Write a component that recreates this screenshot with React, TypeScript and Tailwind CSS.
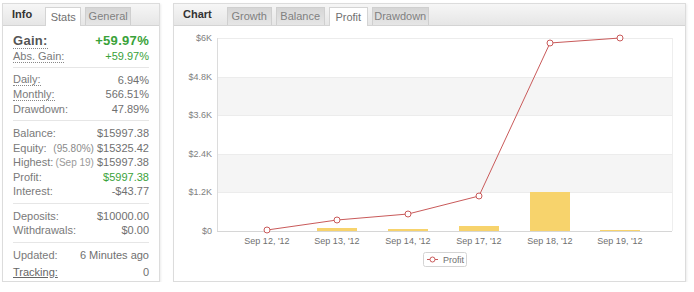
import React from "react";

const font = { fontFamily: '"Liberation Sans", Tahoma, Arial, sans-serif' };

type Row = { label: string; value: React.ReactNode; dotted?: boolean; underline?: boolean; green?: boolean };

const sections: Row[][] = [
  [
    { label: "Daily:", value: "6.94%", dotted: true },
    { label: "Monthly:", value: "566.51%", dotted: true },
    { label: "Drawdown:", value: "47.89%" },
  ],
  [
    { label: "Balance:", value: "$15997.38" },
    {
      label: "Equity:",
      value: (
        <>
          <span className="text-[10px] text-[#8a8a8a]">(95.80%)</span> $15325.42
        </>
      ),
    },
    {
      label: "Highest:",
      value: (
        <>
          <span className="text-[10px] text-[#9a9a9a]">(Sep 19)</span> $15997.38
        </>
      ),
    },
    { label: "Profit:", value: "$5997.38", green: true },
    { label: "Interest:", value: "-$43.77" },
  ],
  [
    { label: "Deposits:", value: "$10000.00" },
    { label: "Withdrawals:", value: "$0.00" },
  ],
];

const StatRow = ({ row }: { row: Row }) => (
  <div className="flex h-[14.5px] items-center justify-between">
    <span
      className={
        row.dotted
          ? "border-b border-dotted border-[#888] leading-[12px]"
          : row.underline
          ? "underline"
          : ""
      }
    >
      {row.label}
    </span>
    <span className={row.green ? "text-[#3aa23a]" : "text-[#707070]"}>{row.value}</span>
  </div>
);

const Tab = ({ label, active, w }: { label: string; active?: boolean; w: string }) => (
  <div
    className={
      active
        ? `${w} h-[19px] mt-[4px] -mb-px flex items-center justify-center bg-white border border-b-0 border-[#d4d4d4] text-[#707070]`
        : `${w} h-[18px] mt-[4px] flex items-center justify-center bg-gradient-to-b from-[#d6d6d6] to-[#e6e6e6] border border-b-0 border-[#cfcfcf] text-[#808080]`
    }
  >
    {label}
  </div>
);

const points = [
  { x: 93, y: 204, label: "Sep 12, '12", bar: 0 },
  { x: 163, y: 194, label: "Sep 13, '12", bar: 3 },
  { x: 234, y: 188, label: "Sep 14, '12", bar: 2 },
  { x: 305, y: 170, label: "Sep 17, '12", bar: 5 },
  { x: 376, y: 17, label: "Sep 18, '12", bar: 39 },
  { x: 446, y: 12, label: "Sep 19, '12", bar: 1 },
];

const yTicks = [
  { y: 12, t: "$6K" },
  { y: 51, t: "$4.8K" },
  { y: 89, t: "$3.6K" },
  { y: 128, t: "$2.4K" },
  { y: 166, t: "$1.2K" },
  { y: 205, t: "$0" },
];

const ProfitChart = () => (
  <svg width="512" height="255" className="block" style={font}>
    <rect x="43" y="51" width="455" height="38" fill="#f5f5f5" />
    <rect x="43" y="128" width="455" height="38" fill="#f5f5f5" />
    {yTicks.map((t) => (
      <g key={t.t}>
        <line x1="43" x2="498" y1={t.y + 0.5} y2={t.y + 0.5} stroke="#ececec" />
        <text x="38" y={t.y + 3} textAnchor="end" fontSize="9" fill="#808080">
          {t.t}
        </text>
      </g>
    ))}
    <line x1="498.5" x2="498.5" y1="12" y2="205" stroke="#eeeeee" />
    <line x1="43.5" x2="43.5" y1="12" y2="206" stroke="#dcdcdc" />
    <line x1="43" x2="498" y1="205.5" y2="205.5" stroke="#d6d6d6" />
    {points.map((p) =>
      p.bar > 0 ? (
        <rect key={"b" + p.label} x={p.x - 20} y={205 - p.bar} width="40" height={p.bar} fill="#f7d36c" />
      ) : null
    )}
    <polyline
      points={points.map((p) => `${p.x},${p.y}`).join(" ")}
      fill="none"
      stroke="#c95a5a"
      strokeWidth="1"
    />
    {points.map((p) => (
      <g key={p.label}>
        <circle cx={p.x} cy={p.y} r="3" fill="#fff" stroke="#c95a5a" strokeWidth="1" />
        <text x={p.x} y="218" textAnchor="middle" fontSize="9" fill="#707070">
          {p.label}
        </text>
      </g>
    ))}
    <rect x="249.5" y="226.5" width="43" height="14" rx="2" fill="#fff" stroke="#d4d4d4" />
    <line x1="253" x2="264" y1="233.5" y2="233.5" stroke="#c95a5a" />
    <circle cx="258.5" cy="233.5" r="2.5" fill="#fff" stroke="#c95a5a" />
    <text x="269" y="236.5" fontSize="9" fill="#707070">
      Profit
    </text>
  </svg>
);

export default function App() {
  return (
    <div className="flex gap-[13px] bg-white pl-[2px] pt-[3px] text-[11px] text-[#7a7a7a]" style={font}>
      {/* Stats panel */}
      <div className="flex h-[279px] w-[158px] flex-col border border-[#dcdcdc] shadow-[1px_1px_2px_rgba(0,0,0,0.08)]">
        <div className="flex h-[22px] items-end gap-[4px] border-b border-[#d4d4d4] bg-gradient-to-b from-[#f6f6f6] to-[#e6e6e6] pl-[9px]">
          <div className="mr-[9px] self-center font-bold text-[#333]">Info</div>
          <Tab label="Stats" active w="w-[36px]" />
          <Tab label="General" w="w-[46px]" />
        </div>
        <div className="px-[10px]">
          <div className="border-b border-[#e6e6e6] pb-[3px] pt-[7px]">
            <div className="flex h-[16px] items-center justify-between text-[13px] font-bold tracking-[0.3px]">
              <span className="border-b border-dotted border-[#888] leading-[14px] text-[#555]">Gain:</span>
              <span className="text-[#3aa23a]">+59.97%</span>
            </div>
            <div className="flex h-[14.5px] items-center justify-between">
              <span className="border-b border-dotted border-[#888] leading-[12px]">Abs. Gain:</span>
              <span className="text-[#3aa23a]">+59.97%</span>
            </div>
          </div>
          {sections.map((rows, i) => (
            <div key={i} className="border-b border-[#e6e6e6] pb-[4px] pt-[5px]">
              {rows.map((r) => (
                <StatRow key={r.label} row={r} />
              ))}
            </div>
          ))}
          <div className="pt-[5px]">
            <div className="flex h-[14.5px] items-center justify-between">
              <span>Updated:</span>
              <span className="text-[#707070]">6 Minutes ago</span>
            </div>
            <div className="mt-[2px] flex h-[16px] items-center justify-between">
              <span className="underline text-[#666]">Tracking:</span>
              <span className="text-[#707070]">0</span>
            </div>
          </div>
        </div>
      </div>

      {/* Chart panel */}
      <div className="flex h-[279px] w-[513px] flex-col border border-[#dcdcdc] shadow-[1px_1px_2px_rgba(0,0,0,0.08)]">
        <div className="flex h-[22px] items-end gap-[4px] border-b border-[#d4d4d4] bg-gradient-to-b from-[#f6f6f6] to-[#e6e6e6] pl-[9px]">
          <div className="mr-[11px] self-center font-bold text-[#333]">Chart</div>
          <Tab label="Growth" w="w-[45px]" />
          <Tab label="Balance" w="w-[49px]" />
          <Tab label="Profit" active w="w-[39px]" />
          <Tab label="Drawdown" w="w-[57px]" />
        </div>
        <ProfitChart />
      </div>
    </div>
  );
}
